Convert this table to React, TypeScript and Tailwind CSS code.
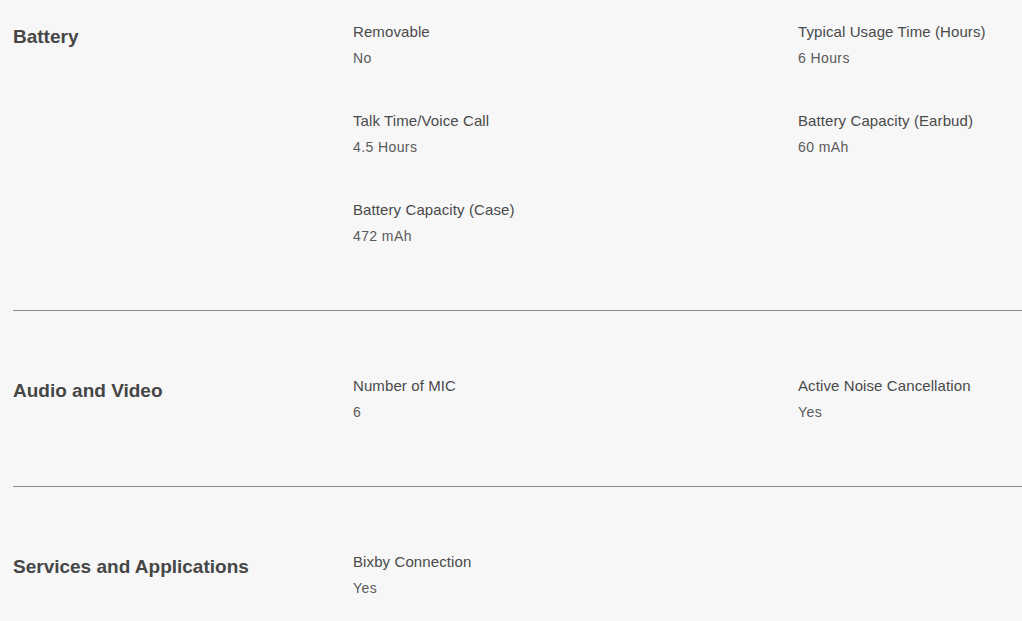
const sections = [
  {
    title: 'Battery',
    specs: [
      { label: 'Removable', value: 'No' },
      { label: 'Typical Usage Time (Hours)', value: '6 Hours' },
      { label: 'Talk Time/Voice Call', value: '4.5 Hours' },
      { label: 'Battery Capacity (Earbud)', value: '60 mAh' },
      { label: 'Battery Capacity (Case)', value: '472 mAh' },
    ],
  },
  {
    title: 'Audio and Video',
    specs: [
      { label: 'Number of MIC', value: '6' },
      { label: 'Active Noise Cancellation', value: 'Yes' },
    ],
  },
  {
    title: 'Services and Applications',
    specs: [{ label: 'Bixby Connection', value: 'Yes' }],
  },
];

// padding per section so the dividers land where the page has them
const pads = ['pt-[19px] pb-[61px] border-b', 'pt-[62px] pb-[61px] border-b', 'pt-[62px] pb-[61px]'];

export default function App() {
  return (
    <div className="min-h-[621px] w-[1022px] overflow-hidden bg-[#f7f7f7] pl-[13px] font-['Liberation_Sans',Arial,sans-serif]">
      {sections.map((section, i) => (
        <section key={section.title} className={'flex border-[#8a8a8a] ' + pads[i]}>
          <h3 className="w-[340px] shrink-0 text-[19px] leading-[36px] font-bold text-[#464646]">
            {section.title}
          </h3>
          <div className="grid flex-1 grid-cols-[445px_1fr] gap-y-[37px]">
            {section.specs.map((spec) => (
              <div key={spec.label}>
                <p className="text-[15px] leading-[26px] tracking-[0.1px] text-[#4a4a4a]">{spec.label}</p>
                <p className="text-[14px] leading-[26px] tracking-[0.4px] text-[#5a5a5a]">{spec.value}</p>
              </div>
            ))}
          </div>
        </section>
      ))}
    </div>
  );
}
